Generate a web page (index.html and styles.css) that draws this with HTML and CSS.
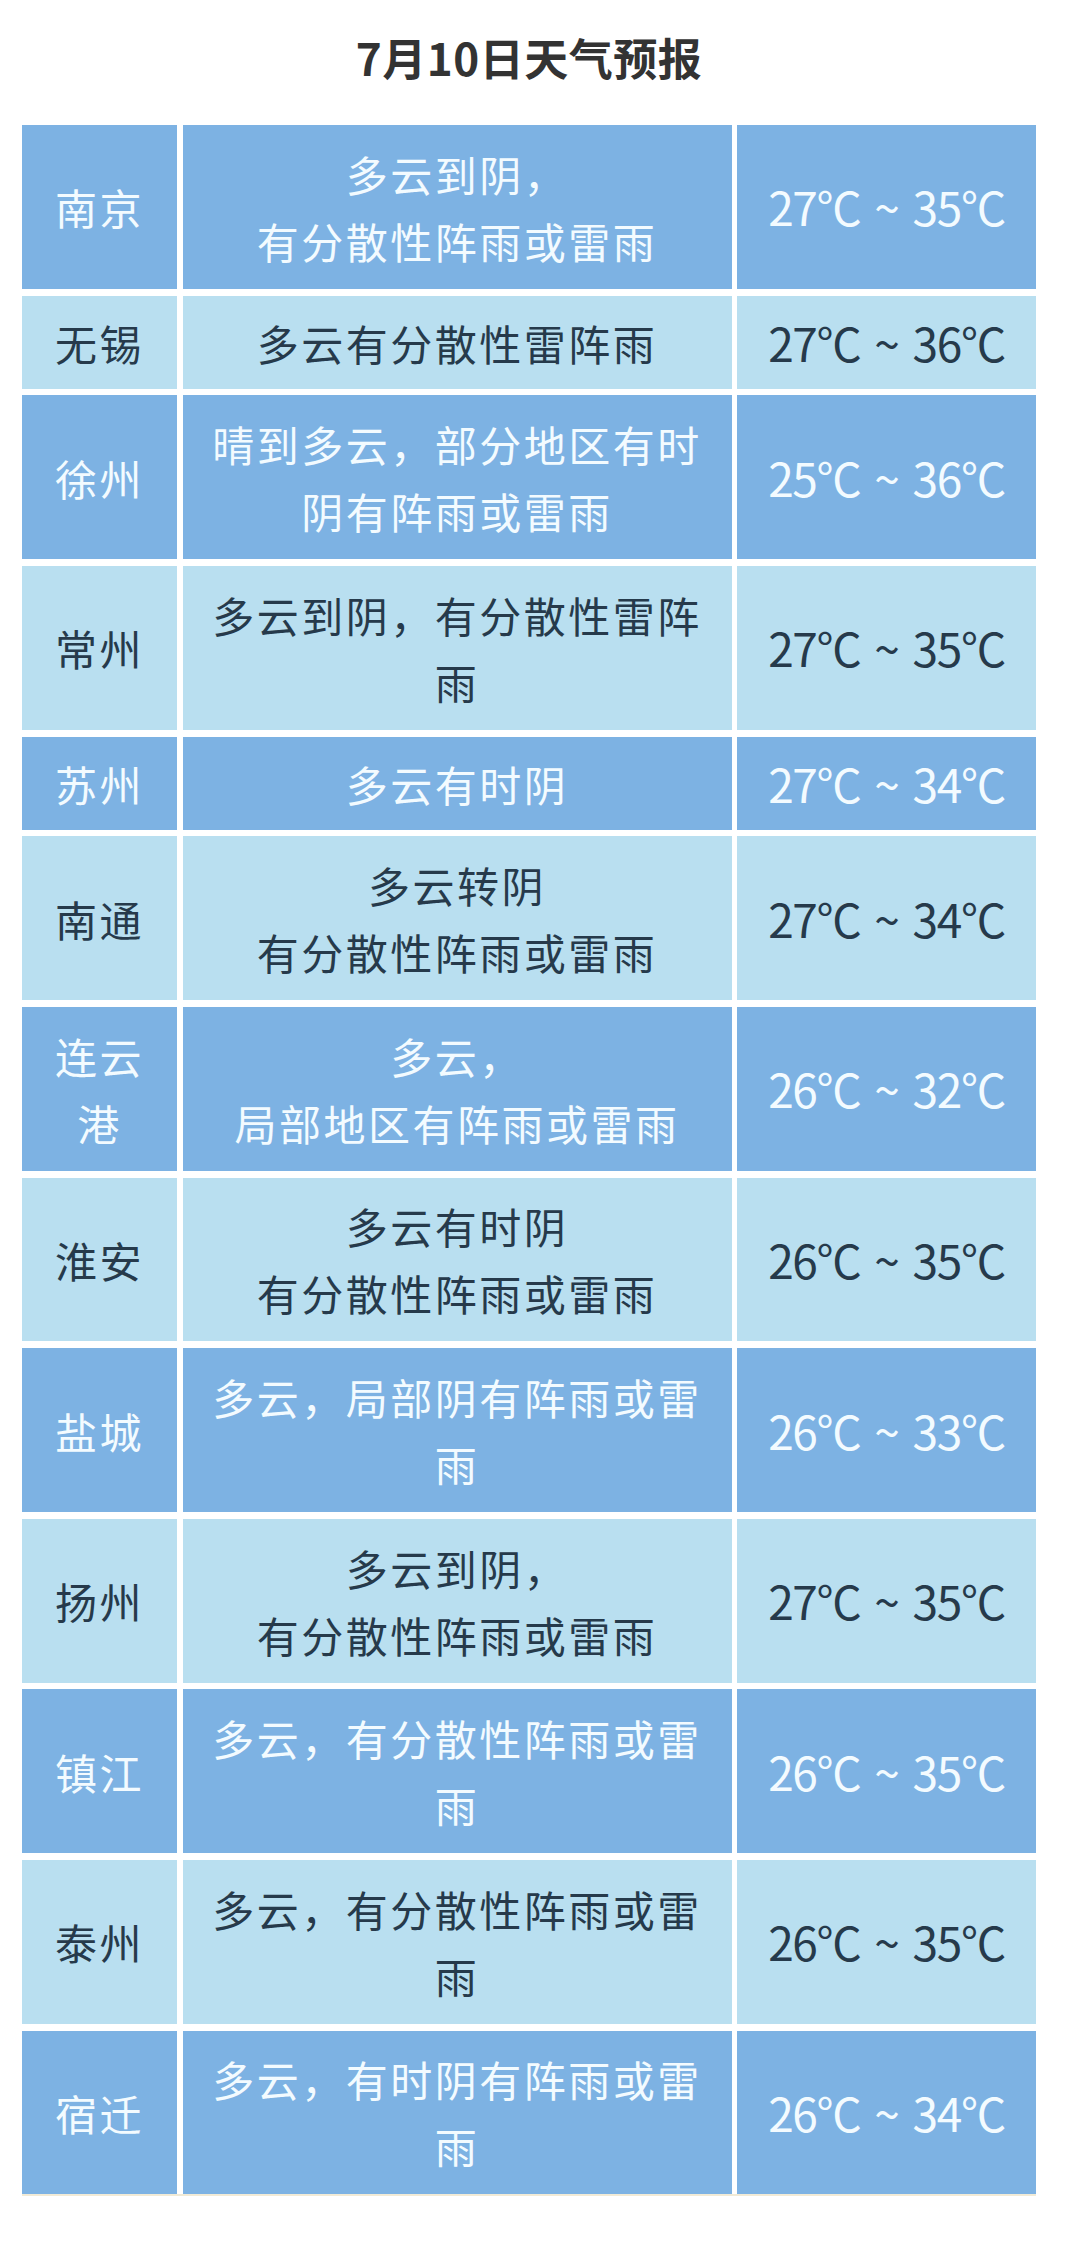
FILE: index.html
```html
<!DOCTYPE html>
<html lang="zh-CN">
<head>
<meta charset="utf-8">
<title>7月10日天气预报</title>
<link rel="stylesheet" href="styles.css">
</head>
<body>
<div class="page">
  <h1 class="title">7月10日天气预报</h1>
  <div class="table">
    <div class="row dark tall"><div class="cell city">南京</div><div class="cell desc">多云到阴，<br>有分散性阵雨或雷雨</div><div class="cell temp">27°C ~ 35°C</div></div>
    <div class="row light"><div class="cell city">无锡</div><div class="cell desc">多云有分散性雷阵雨</div><div class="cell temp">27°C ~ 36°C</div></div>
    <div class="row dark tall"><div class="cell city">徐州</div><div class="cell desc">晴到多云，部分地区有时阴有阵雨或雷雨</div><div class="cell temp">25°C ~ 36°C</div></div>
    <div class="row light tall"><div class="cell city">常州</div><div class="cell desc">多云到阴，有分散性雷阵雨</div><div class="cell temp">27°C ~ 35°C</div></div>
    <div class="row dark"><div class="cell city">苏州</div><div class="cell desc">多云有时阴</div><div class="cell temp">27°C ~ 34°C</div></div>
    <div class="row light tall"><div class="cell city">南通</div><div class="cell desc">多云转阴<br>有分散性阵雨或雷雨</div><div class="cell temp">27°C ~ 34°C</div></div>
    <div class="row dark tall"><div class="cell city">连云港</div><div class="cell desc">多云，<br>局部地区有阵雨或雷雨</div><div class="cell temp">26°C ~ 32°C</div></div>
    <div class="row light tall"><div class="cell city">淮安</div><div class="cell desc">多云有时阴<br>有分散性阵雨或雷雨</div><div class="cell temp">26°C ~ 35°C</div></div>
    <div class="row dark tall"><div class="cell city">盐城</div><div class="cell desc">多云，局部阴有阵雨或雷雨</div><div class="cell temp">26°C ~ 33°C</div></div>
    <div class="row light tall"><div class="cell city">扬州</div><div class="cell desc">多云到阴，<br>有分散性阵雨或雷雨</div><div class="cell temp">27°C ~ 35°C</div></div>
    <div class="row dark tall"><div class="cell city">镇江</div><div class="cell desc">多云，有分散性阵雨或雷雨</div><div class="cell temp">26°C ~ 35°C</div></div>
    <div class="row light tall"><div class="cell city">泰州</div><div class="cell desc">多云，有分散性阵雨或雷雨</div><div class="cell temp">26°C ~ 35°C</div></div>
    <div class="row dark tall"><div class="cell city">宿迁</div><div class="cell desc">多云，有时阴有阵雨或雷雨</div><div class="cell temp">26°C ~ 34°C</div></div>
  </div>
</div>
</body>
</html>
```
FILE: styles.css
```css
html, body {
  margin: 0;
  padding: 0;
  background: #ffffff;
}

body {
  font-family: "Noto Sans CJK SC", "Noto Sans", sans-serif;
}

.page {
  width: 1014px;
  margin-left: 22px;
  padding-top: 27px;
}

.title {
  margin: 0;
  height: 60px;
  line-height: 60px;
  text-align: center;
  font-size: 44px;
  font-weight: 700;
  color: #333333;
  letter-spacing: 0.5px;
}

.table {
  margin-top: 38px;
  display: flex;
  flex-direction: column;
  gap: 6.8px;
  border-bottom: 2px solid #f1ead6;
}

.row {
  display: grid;
  grid-template-columns: 155px 549px 299px;
  column-gap: 5.5px;
  min-height: 93px;
}

.row.tall {
  min-height: 163.8px;
}

.cell {
  display: flex;
  align-items: center;
  justify-content: center;
  text-align: center;
  font-size: 42px;
  line-height: 67px;
  letter-spacing: 2.5px;
  box-sizing: border-box;
}

.city {
  padding: 0 14px;
}

.desc {
  padding: 0 24px;
}

.temp {
  font-size: 46px;
  letter-spacing: -1.3px;
  word-spacing: 5px;
}

.dark .cell {
  background: #7db2e3;
  color: #f3fbff;
}

.light .cell {
  background: #b9dff0;
  color: #263a4b;
}
```
